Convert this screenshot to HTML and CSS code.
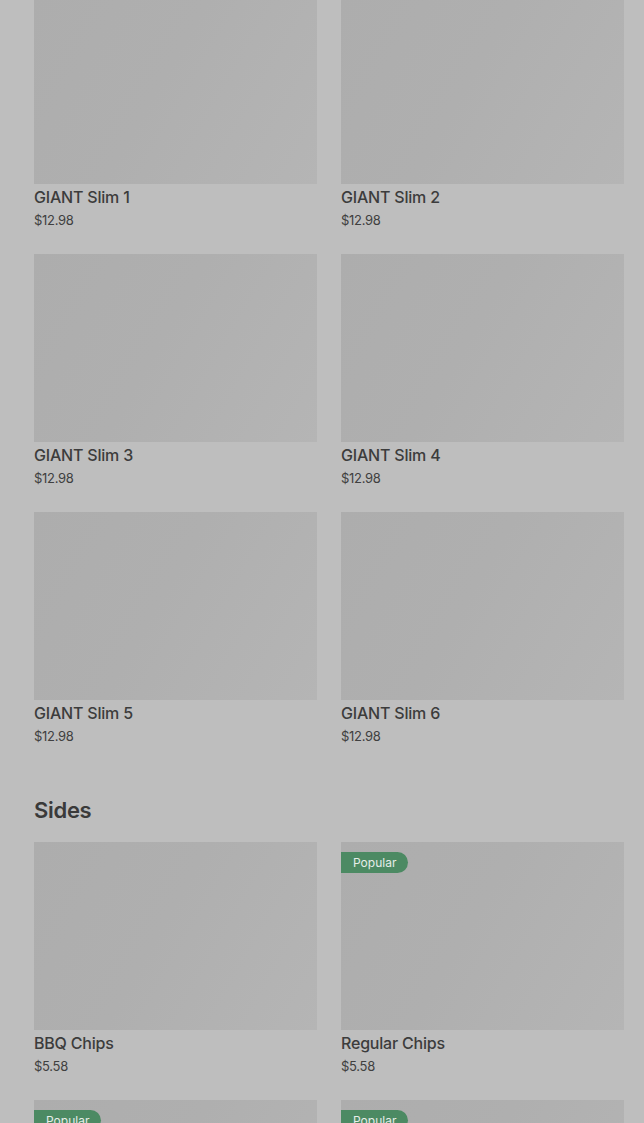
FILE: index.html
```html
<!DOCTYPE html>
<html lang="en">
<head>
<meta charset="utf-8">
<title>Menu</title>
<link rel="stylesheet" href="styles.css">
</head>
<body>
<main class="page">
  <section class="section">
    <div class="grid">
      <article class="card"><div class="thumb"></div><h3 class="name">GIANT Slim 1</h3><p class="price">$12.98</p></article>
      <article class="card"><div class="thumb"></div><h3 class="name">GIANT Slim 2</h3><p class="price">$12.98</p></article>
      <article class="card"><div class="thumb"></div><h3 class="name">GIANT Slim 3</h3><p class="price">$12.98</p></article>
      <article class="card"><div class="thumb"></div><h3 class="name">GIANT Slim 4</h3><p class="price">$12.98</p></article>
      <article class="card"><div class="thumb"></div><h3 class="name">GIANT Slim 5</h3><p class="price">$12.98</p></article>
      <article class="card"><div class="thumb"></div><h3 class="name">GIANT Slim 6</h3><p class="price">$12.98</p></article>
    </div>
  </section>
  <section class="section">
    <h2 class="section-title">Sides</h2>
    <div class="grid">
      <article class="card"><div class="thumb"></div><h3 class="name">BBQ Chips</h3><p class="price">$5.58</p></article>
      <article class="card"><div class="thumb"><span class="badge">Popular</span></div><h3 class="name">Regular Chips</h3><p class="price">$5.58</p></article>
      <article class="card"><div class="thumb"><span class="badge">Popular</span></div><h3 class="name">Cookie</h3><p class="price">$2.58</p></article>
      <article class="card"><div class="thumb"><span class="badge">Popular</span></div><h3 class="name">Brownie</h3><p class="price">$2.58</p></article>
    </div>
  </section>
</main>
</body>
</html>
```

FILE: styles.css
```css
* { box-sizing: border-box; }
html, body { margin: 0; padding: 0; }
body {
  background: #bebebe;
  color: #3b3b3b;
  font-family: Inter, "Noto Sans", "Liberation Sans", sans-serif;
  overflow: hidden;
}
.page {
  padding: 0 20px 0 34px;
  margin-top: -4px;
}
.section + .section { margin-top: 50px; }
.section-title {
  margin: 0 0 18px;
  font-size: 22px;
  line-height: 28px;
  font-weight: 600;
  letter-spacing: -0.3px;
  color: #3a3a3a;
}
.grid {
  display: grid;
  grid-template-columns: 283px 283px;
  column-gap: 24px;
  row-gap: 24px;
}
.card { display: flex; flex-direction: column; }
.thumb {
  position: relative;
  height: 188px;
  background: linear-gradient(120deg, #adadad 0%, #afafaf 45%, #b5b5b5 100%);
}
.badge {
  position: absolute;
  left: 0;
  top: 10px;
  height: 21px;
  padding: 0 12px;
  display: flex;
  align-items: center;
  background: #4c8a63;
  color: #e6ede8;
  font-size: 12px;
  border-radius: 0 11px 11px 0;
}
.name {
  margin: 2px 0 0;
  font-size: 16px;
  line-height: 22px;
  font-weight: 500;
  letter-spacing: -0.2px;
  color: #3c3c3c;
}
.price {
  margin: 2px 0 0;
  font-size: 13px;
  line-height: 20px;
  letter-spacing: -0.3px;
  color: #404040;
}
```
